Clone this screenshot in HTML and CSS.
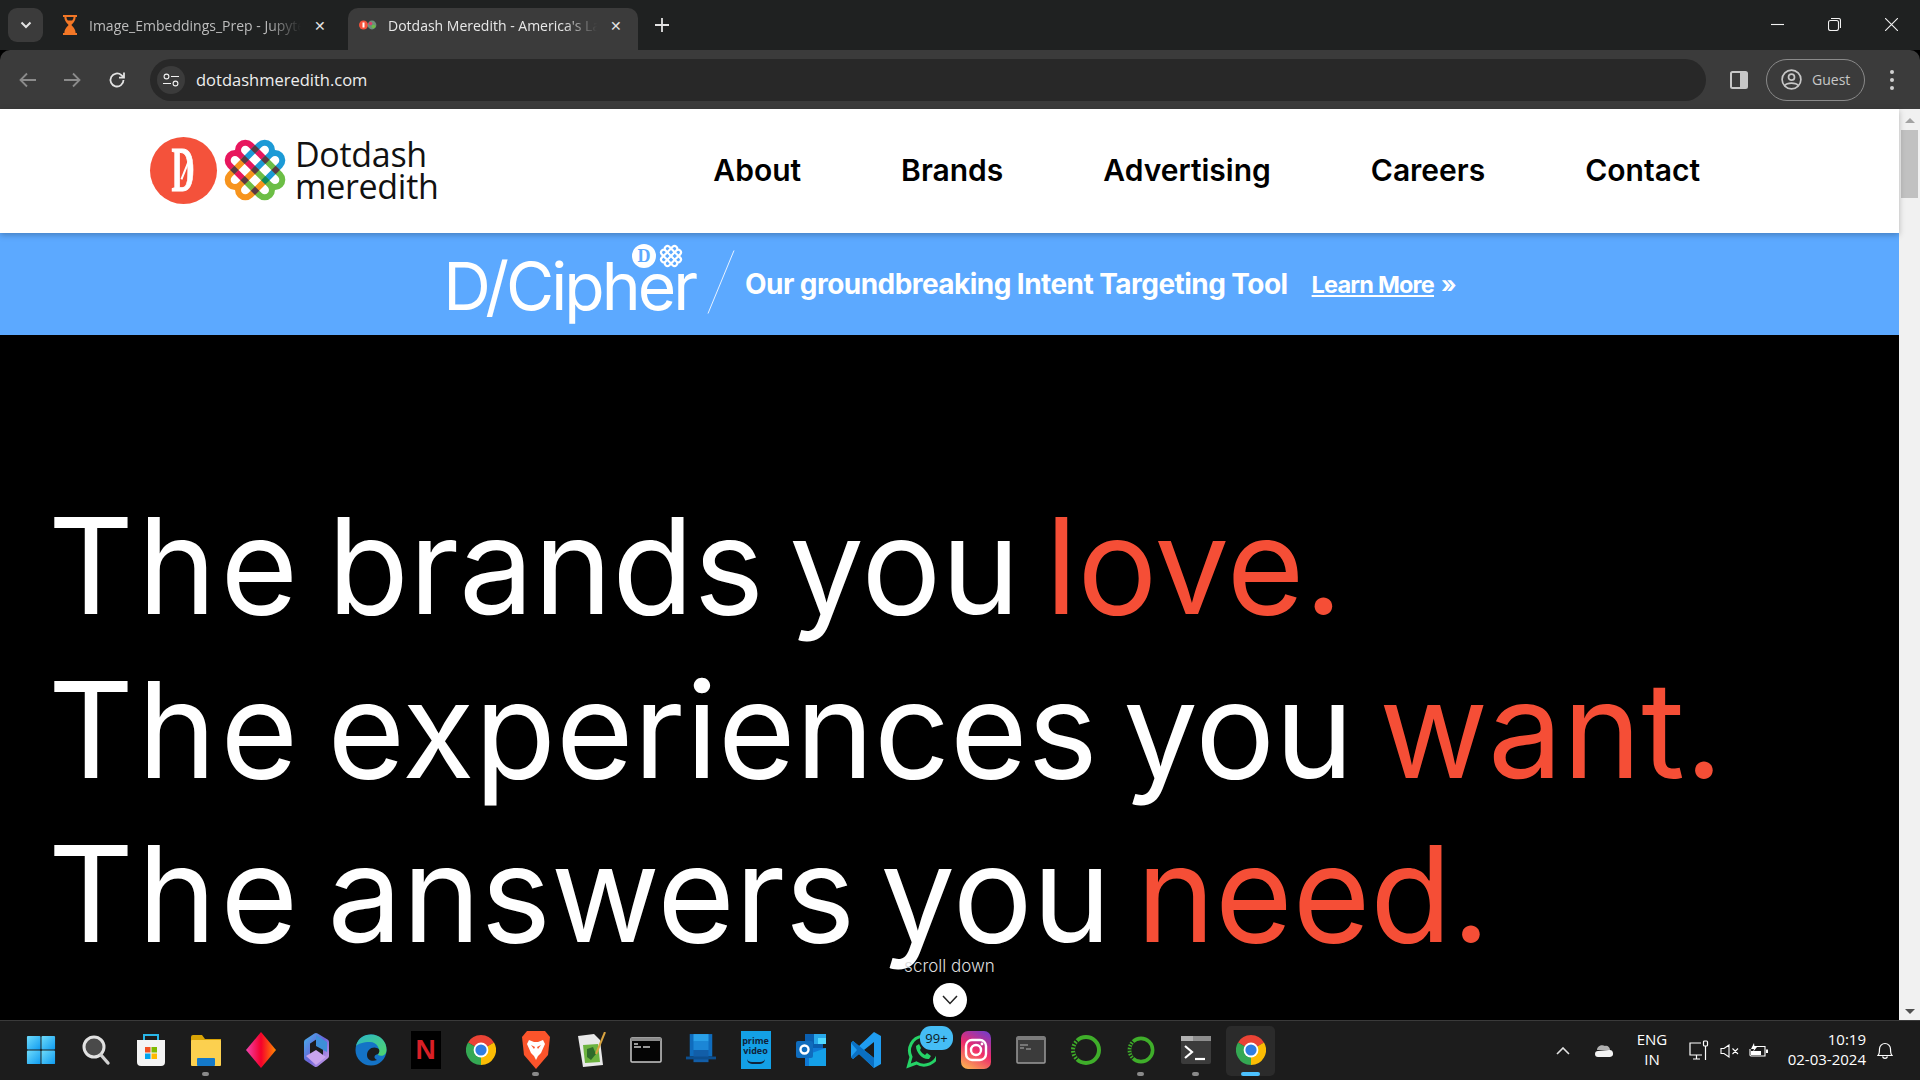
FILE: index.html
```html
<!DOCTYPE html>
<html lang="en">
<head>
    <meta charset="UTF-8">
    <title>Dotdash Meredith - America's Largest Digital and Print Publisher</title>
    <link rel="stylesheet" href="styles.css">
</head>
<body>

<svg class="defs" width="0" height="0">
    <defs>
        <g id="knotPath">
            <path d="M0 -14.6H-21A7.3 7.3 0 0 0 -21 0H0M0 0H-21A7.3 7.3 0 0 0 -21 14.6H0"/>
        </g>
        <g id="chromeLogo">
            <path fill="#ea4335" d="M15 15L2 7.5A15 15 0 0 1 28 7.5Z"/>
            <path fill="#fbbc04" d="M15 15L28 7.5A15 15 0 0 1 15 30Z"/>
            <path fill="#34a853" d="M15 15L15 30A15 15 0 0 1 2 7.5Z"/>
            <circle cx="15" cy="15" r="7.4" fill="#fff"/>
            <circle cx="15" cy="15" r="5.6" fill="#2f7de1"/>
        </g>
        <linearGradient id="edgeGrad" x1="0" y1="0" x2="1" y2="1">
            <stop offset="0" stop-color="#2bb6c9"/>
            <stop offset="1" stop-color="#50d66a"/>
        </linearGradient>
        <linearGradient id="copilotGrad" x1="0" y1="0" x2="1" y2="1">
            <stop offset="0" stop-color="#4aa5e8"/>
            <stop offset="0.5" stop-color="#6a62d8"/>
            <stop offset="1" stop-color="#c79ae8"/>
        </linearGradient>
        <linearGradient id="gemGrad" x1="0" y1="0" x2="1" y2="0">
            <stop offset="0" stop-color="#f044b0"/>
            <stop offset="0.5" stop-color="#f5002b"/>
            <stop offset="1" stop-color="#ff8a00"/>
        </linearGradient>
        <linearGradient id="winGrad" x1="0" y1="0" x2="1" y2="1">
            <stop offset="0" stop-color="#6fdcfb"/>
            <stop offset="1" stop-color="#0f9bf0"/>
        </linearGradient>
    </defs>
</svg>

<div class="tabstrip">
    <div class="tab-search">
        <svg width="12" height="8" viewBox="0 0 12 8"><path class="line" stroke-width="2" d="M1.5 1.5L6 6L10.5 1.5"/></svg>
    </div>
    <div class="tab">
        <svg class="fav" width="16" height="20" viewBox="0 0 16 20"><path fill="#f37726" d="M1 0H15V2H13.6C13.6 6 11 8 9.4 10C11 12 13.6 14 13.6 18H15V20H1V18H2.4C2.4 14 5 12 6.6 10C5 8 2.4 6 2.4 2H1ZM4.4 2C4.500 3.4 5 4.6 5.8 5.6H10.2C11 4.6 11.5 3.4 11.6 2Z"/></svg>
        <span class="tab-title">Image_Embeddings_Prep - Jupyter</span>
        <span class="tab-close">✕</span>
    </div>
    <div class="tab active">
        <svg class="fav" width="18" height="10" viewBox="0 0 18 10">
            <circle cx="4.5" cy="5" r="4.5" fill="#f4523b"/><rect x="3.5" y="2.5" width="2" height="5" fill="#fff"/>
            <circle cx="13" cy="5" r="4.4" fill="#6f8f7a"/><circle cx="11.5" cy="3.5" r="1.8" fill="#d8416b"/><circle cx="14.5" cy="6.5" r="1.8" fill="#6cbe45"/>
        </svg>
        <span class="tab-title">Dotdash Meredith - America's Largest</span>
        <span class="tab-close">✕</span>
    </div>
    <svg class="new-tab" width="14" height="14" viewBox="0 0 14 14"><path class="line" stroke-width="1.8" d="M7 0V14M0 7H14"/></svg>
    <div class="win-controls">
        <svg width="13" height="13" viewBox="0 0 13 13"><path class="thin" d="M0 6.5H13"/></svg>
        <svg width="13" height="13" viewBox="0 0 13 13"><rect class="thin" x="0.5" y="2.5" width="10" height="10" rx="2"/><path class="thin" d="M3 .5H10.5A2 2 0 0 1 12.5 2.5V10"/></svg>
        <svg width="13" height="13" viewBox="0 0 13 13"><path class="thin" d="M0 0L13 13M13 0L0 13"/></svg>
    </div>
</div>

<div class="toolbar">
    <svg class="nav-arrow" width="18" height="16" viewBox="0 0 18 16"><path class="dim" d="M17 8H2M8 1.5L1.5 8L8 14.5"/></svg>
    <svg class="nav-arrow" width="18" height="16" viewBox="0 0 18 16"><path class="dim" d="M1 8H16M10 1.5L16.5 8L10 14.5"/></svg>
    <svg class="nav-reload" width="18" height="18" viewBox="0 0 18 18"><path class="line" stroke-width="1.8" d="M15.5 9A6.5 6.5 0 1 1 13.4 4.2L16 6.6M16 1.5V6.6H11"/></svg>
    <div class="omnibox">
        <span class="site-chip">
            <svg width="16" height="14" viewBox="0 0 16 14"><circle class="thin" cx="3.5" cy="3.5" r="2.4"/><path class="thin" stroke-width="2" d="M8 3.5H16M0 10.5H8"/><circle class="thin" cx="12.5" cy="10.5" r="2.4"/></svg>
        </span>
        <span class="url">dotdashmeredith.com</span>
    </div>
    <svg class="split-icon" width="18" height="18" viewBox="0 0 18 18"><rect x="1" y="1" width="16" height="16" rx="1.5" fill="none" stroke="#c7c7c7" stroke-width="2"/><rect x="10" y="1" width="7" height="16" fill="#c7c7c7"/></svg>
    <div class="guest">
        <svg width="21" height="21" viewBox="0 0 21 21"><g fill="none" stroke="#c7c7c7" stroke-width="1.7"><circle cx="10.5" cy="10.5" r="9.4"/><circle cx="10.5" cy="8.2" r="3"/><path d="M4 16.5C6 13.4 15 13.4 17 16.5"/></g></svg>
        <span>Guest</span>
    </div>
    <div class="kebab"><i></i><i></i><i></i></div>
</div>

<div class="viewport">
    <div class="page">
        <header class="site-header">
            <a class="logo">
                <span class="logo-d">
                    <b>D</b>
                    <i class="logo-d-cut"></i>
                </span>
                <svg class="knot" width="66" height="66" viewBox="-33 -33 66 66">
                    <g transform="rotate(45)" fill="none" stroke-width="6">
                        <use href="#knotPath" stroke="#e8175d"/>
                        <use href="#knotPath" stroke="#1c9ad6" transform="rotate(90)"/>
                        <use href="#knotPath" stroke="#6cbe45" transform="rotate(180)"/>
                        <use href="#knotPath" stroke="#f7941d" transform="rotate(270)"/>
                    </g>
                    <g fill="#5a3a42" transform="rotate(45)">
                        <rect x="-17.6" y="-17.6" width="6" height="6"/><rect x="-3" y="-17.6" width="6" height="6"/><rect x="11.6" y="-17.6" width="6" height="6"/>
                        <rect x="-17.6" y="-3" width="6" height="6"/><rect x="-3" y="-3" width="6" height="6"/><rect x="11.6" y="-3" width="6" height="6" fill="#0f8a5a"/>
                        <rect x="-17.6" y="11.6" width="6" height="6"/><rect x="-3" y="11.6" width="6" height="6"/><rect x="11.6" y="11.6" width="6" height="6"/>
                    </g>
                </svg>
                <span class="logo-text">Dotdash<br>meredith</span>
            </a>
            <nav class="main-nav">
                <a>About</a>
                <a>Brands</a>
                <a>Advertising</a>
                <a>Careers</a>
                <a>Contact</a>
            </nav>
        </header>

        <div class="promo">
            <div class="cipher">
                D/Cipher
                <span class="cipher-marks">
                    <span class="mini-d">D</span>
                    <svg width="24" height="24" viewBox="-33 -33 66 66">
                        <g transform="rotate(45)" fill="none" stroke="#fff" stroke-width="6">
                            <use href="#knotPath"/>
                            <use href="#knotPath" transform="rotate(90)"/>
                            <use href="#knotPath" transform="rotate(180)"/>
                            <use href="#knotPath" transform="rotate(270)"/>
                        </g>
                    </svg>
                </span>
            </div>
            <svg class="promo-slash" width="28" height="64" viewBox="0 0 28 64"><path stroke="#e8f2ff" d="M27 0.5L1 63.5"/></svg>
            <span class="promo-text">Our groundbreaking Intent Targeting Tool</span>
            <span class="promo-link"><u>Learn More</u><span class="promo-arrows">»</span></span>
        </div>

        <section class="hero">
            <h1>
                <span><i class="lead">The</i> brands you <em>love.</em></span>
                <span><i class="lead">The</i> experiences you <em>want.</em></span>
                <span><i class="lead">The</i> answers you <em>need.</em></span>
            </h1>
            <div class="scroll-down">
                <span>scroll down</span>
                <i>
                    <svg width="16" height="10" viewBox="0 0 16 10"><path fill="none" stroke="#222" stroke-width="1.5" d="M1 1L8 8.5L15 1"/></svg>
                </i>
            </div>
        </section>
    </div>
    <div class="scrollbar">
        <i class="arrow-up"></i>
        <i class="thumb"></i>
        <i class="arrow-down"></i>
    </div>
</div>

<footer class="taskbar">
    <div class="task-icons">
        <div class="task"><svg width="30" height="30" viewBox="0 0 32 32"><g fill="url(#winGrad)"><rect x="1" y="1" width="14.5" height="14.5" rx="1"/><rect x="16.5" y="1" width="14.5" height="14.5" rx="1"/><rect x="1" y="16.5" width="14.5" height="14.5" rx="1"/><rect x="16.5" y="16.5" width="14.5" height="14.5" rx="1"/></g></svg></div>
        <div class="task"><svg width="30" height="32" viewBox="0 0 30 32"><circle cx="13" cy="13" r="10" fill="#4a4a4a" stroke="#e2e2e2" stroke-width="3"/><path stroke="#d0d0d0" stroke-width="3.4" stroke-linecap="round" d="M20 21L27 29"/></svg></div>
        <div class="task"><svg width="30" height="34" viewBox="0 0 30 34"><path fill="none" stroke="#29b6e8" stroke-width="2" d="M8 8V2H22V8"/><path fill="#f4f4f4" d="M1 7H29V29A4 4 0 0 1 25 33H5A4 4 0 0 1 1 29Z"/><rect x="9" y="14" width="5.5" height="5.5" fill="#f25022"/><rect x="15.5" y="14" width="5.5" height="5.5" fill="#7fba00"/><rect x="9" y="20.5" width="5.5" height="5.5" fill="#00a4ef"/><rect x="15.5" y="20.5" width="5.5" height="5.5" fill="#ffb900"/></svg></div>
        <div class="task running"><svg width="30" height="32" viewBox="0 0 30 32"><path fill="#d9a406" d="M0 3A2 2 0 0 1 2 1H11L14 5H30V12H0Z"/><rect y="6" width="30" height="26" rx="1" fill="#fcd04f"/><rect x="6" y="24" width="18" height="8" rx="1" fill="#1479c9"/></svg></div>
        <div class="task"><svg width="30" height="36" viewBox="0 0 30 36"><path fill="url(#gemGrad)" d="M15 0L30 18L15 36L0 18Z"/></svg></div>
        <div class="task"><svg width="28" height="36" viewBox="0 0 28 36"><path fill="none" stroke="url(#copilotGrad)" stroke-width="6" stroke-linejoin="round" d="M14 4L24 10V24L14 32L5 26V10Z"/><path fill="#c9a4ee" d="M4 24L14 18L24 25L14 33Z"/><path fill="#3d8fd8" d="M14 3L25 10V20L14 14Z"/></svg></div>
        <div class="task"><svg width="32" height="38" viewBox="0 0 32 38"><circle cx="16" cy="19" r="15.5" fill="#1473c6"/><path fill="url(#edgeGrad)" d="M1 15C3 6 10 3.500 16 3.500C25 3.500 31.500 10 31.500 19C31.500 24 27 26 23 24C26 18 22 11 15 11C8 11 3 13 1 15Z"/><path fill="#1c1c1c" d="M12 24C12 19 17 15 22 17C25 18 25 21 23 23C19 24 18 27 22 29C17 31 12 29 12 24Z"/></svg></div>
        <div class="task"><div class="netflix">N</div></div>
        <div class="task"><svg width="30" height="38" viewBox="0 0 30 30"><use href="#chromeLogo"/></svg></div>
        <div class="task running"><svg width="30" height="38" viewBox="0 0 30 38"><path fill="#fb542b" d="M6 0H24L29 6L27 24L15 38L3 24L1 6Z"/><path fill="#fff" d="M8 9L13 11H17L22 9L24 13L20 22L17 25L15 29L13 25L10 22L6 13Z"/><path fill="#fb542b" d="M10 14L14 16L13 18ZM20 14L16 16L17 18Z"/></svg></div>
        <div class="task"><svg width="30" height="36" viewBox="0 0 30 36"><path fill="#e9e9e9" d="M2 4L18 2L24 8L27 33L7 35Z"/><path fill="#6cb33f" d="M7 13L22 12L24 30L9 31Z"/><path fill="#2e6b2a" d="M11 17L17 15L20 22L15 28L11 25Z"/><path stroke="#d9a441" stroke-width="2" d="M29 0L20 22"/></svg></div>
        <div class="task"><svg width="32" height="26" viewBox="0 0 32 26"><rect x="1" y="1" width="30" height="24" rx="1" fill="#050505" stroke="#c9c9c9" stroke-width="1.5"/><rect x="1" y="1" width="30" height="3" fill="#8a8a8a"/><path stroke="#ccc" stroke-width="1.4" d="M4 7H8M4 10H11M13 10H20"/></svg></div>
        <div class="task"><svg width="30" height="32" viewBox="0 0 32 34"><path fill="#0f6cbd" d="M4 0H28V24H4Z"/><path fill="#2aa0e8" d="M8 0H24V8H8Z"/><path fill="#1b86d6" d="M8 8H24V17H8Z"/><path fill="#125ea8" d="M8 17H24V30H8Z"/><rect y="24" width="32" height="3" fill="#0c4f8f"/></svg></div>
        <div class="task"><div class="prime">prime<br>video<i></i></div></div>
        <div class="task"><svg width="30" height="36" viewBox="0 0 30 36"><path fill="#0a5fb0" d="M9 2H27V16H9Z"/><path fill="#28a8ea" d="M18 2H30V12H18Z"/><path fill="#50d9ff" d="M22 6H30V12H22Z"/><path fill="#0f78d4" d="M9 16H30V34H9Z"/><path fill="#14a0e8" d="M13 22L30 16V34H13Z"/><rect y="9" width="17" height="17" rx="2" fill="#0f6cbd"/><circle cx="8.500" cy="17.500" r="4" fill="none" stroke="#fff" stroke-width="2.400"/></svg></div>
        <div class="task"><svg width="32" height="38" viewBox="0 0 32 38"><path fill="#1f9cf0" d="M24 1L31 5V33L24 37L9 23L3 28L1 26V12L3 10L9 15ZM24 11L14 19L24 27Z"/><path fill="#0a6fc2" d="M1 12L3 10L24 27V37L9 23L3 28L1 26L7 19Z"/></svg></div>
        <div class="task whatsapp"><svg width="30" height="38" viewBox="0 0 30 38"><path fill="none" stroke="#25d366" stroke-width="3" d="M2.500 35L5 26A14.500 14.500 0 1 1 10.500 32Z"/><path fill="#25d366" d="M10 15L13 13L15 17L14 19C15 21 17 23 19 24L21 22L25 25L23 28C17 29 10 22 10 15Z"/></svg><span class="badge">99+</span></div>
        <div class="task"><div class="insta"><svg width="30" height="30" viewBox="0 0 30 30"><g fill="none" stroke="#fff" stroke-width="2.400"><rect x="5" y="5" width="20" height="20" rx="6"/><circle cx="15" cy="15" r="5"/></g><circle cx="21" cy="9" r="1.400" fill="#fff"/></svg></div></div>
        <div class="task"><svg width="30" height="28" viewBox="0 0 30 28"><rect x="1" y="1" width="28" height="26" rx="1" fill="#3b3b3b" stroke="#9a9a9a" stroke-width="1.500"/><rect x="1" y="1" width="28" height="3" fill="#7b7b7b"/><path stroke="#8a8a8a" stroke-width="1.400" d="M4 9H12M4 12H8M10 13H15"/></svg></div>
        <div class="task"><svg width="30" height="38" viewBox="0 0 30 38"><circle cx="15" cy="19" r="13" fill="none" stroke="#3fae2a" stroke-width="4"/><path stroke="#1c1c1c" stroke-width="4.400" stroke-dasharray="1.500 1.800" fill="none" d="M6 9.500A13 13 0 0 0 6 28.500"/></svg></div>
        <div class="task running"><svg width="28" height="34" viewBox="0 0 30 38"><circle cx="15" cy="19" r="13" fill="none" stroke="#3fae2a" stroke-width="4"/><path stroke="#1c1c1c" stroke-width="4.400" stroke-dasharray="1.500 1.800" fill="none" d="M6 9.500A13 13 0 0 0 6 28.500"/></svg></div>
        <div class="task running"><svg width="30" height="28" viewBox="0 0 30 28"><rect width="30" height="28" rx="2" fill="#3b3b3b"/><rect width="30" height="5" fill="#8d8d8d"/><rect width="12" height="5" fill="#b0b0b0"/><path fill="none" stroke="#fff" stroke-width="2.200" d="M4 10L11 16L4 22"/><path stroke="#fff" stroke-width="2.200" d="M14 23H24"/></svg></div>
        <div class="task current"><svg width="30" height="38" viewBox="0 0 30 30"><use href="#chromeLogo"/></svg></div>
    </div>
    <div class="tray">
        <svg class="tray-caret" width="14" height="8" viewBox="0 0 14 8"><path class="line" stroke-width="1.6" d="M1 7L7 1L13 7"/></svg>
        <svg class="tray-cloud" width="20" height="13" viewBox="0 0 20 13"><path fill="#b0b0b0" d="M3 6C3 2 8 0 11 2C13 1 16 3 16 6Z"/><path fill="#f2f2f2" d="M4 13A3 3 0 0 1 4 7L15 6A3.500 3.500 0 0 1 16 13Z"/></svg>
        <div class="tray-lang">ENG<br>IN</div>
        <svg class="tray-net" width="21" height="21" viewBox="0 0 21 21"><g fill="none" stroke="#fff" stroke-width="1.200"><path d="M13 3H2V15H14M5 19H12M8.500 15V19"/><rect x="15.500" y="1" width="4" height="5" rx="1"/><path d="M17.500 6V20"/></g></svg>
        <svg class="tray-vol" width="20" height="14" viewBox="0 0 20 14"><path fill="none" stroke="#fff" stroke-width="1.100" d="M1 4.500H4L9 1V13L4 9.500H1ZM12.500 4.500L18 10M18 4.500L12.500 10"/></svg>
        <svg class="tray-batt" width="20" height="15" viewBox="0 0 20 15"><path fill="none" stroke="#fff" stroke-width="1.100" d="M4 3.500H16V13H2A1 1 0 0 1 1 12V6"/><rect x="2" y="8" width="10" height="4" fill="#fff"/><rect x="17" y="6.500" width="2" height="3.500" fill="#fff"/><path fill="#fff" d="M5 0L2 6H5L4 9L8 4H5.500Z"/></svg>
        <div class="tray-clock">10:19<br>02-03-2024</div>
        <svg class="tray-bell" width="16" height="18" viewBox="0 0 16 18"><path fill="none" stroke="#fff" stroke-width="1.200" d="M1 13.500C2.500 12 2.500 10 2.500 7A5.500 5.500 0 0 1 13.500 7C13.500 10 13.500 12 15 13.500ZM5.500 14.500A2.600 2.600 0 0 0 10.500 14.500"/></svg>
    </div>
</footer>

</body>
</html>
```

FILE: styles.css
```css
* {
    box-sizing: border-box;
}
html, body {
    margin: 0;
    height: 100%;
}
body {
    width: 1920px;
    height: 1080px;
    overflow: hidden;
    display: flex;
    flex-direction: column;
    font-family: Inter, "Liberation Sans", sans-serif;
    background: #000;
}
.defs {
    position: absolute;
}
.line, .thin, .dim {
    fill: none;
    stroke: #e3e3e3;
}
.thin {
    stroke: #f2f2f2;
    stroke-width: 1.1;
}
.dim {
    stroke: #8b8b8b;
    stroke-width: 1.8;
}

/* browser chrome */
.tabstrip {
    height: 50px;
    background: #1f2121;
    display: flex;
    align-items: flex-end;
    padding-left: 8px;
    font-family: "Open Sans", sans-serif;
    font-size: 14px;
}
.tab-search {
    width: 35px;
    height: 34px;
    margin-bottom: 8px;
    background: #3b3b3b;
    border-radius: 9px;
    display: flex;
    align-items: center;
    justify-content: center;
}
.tab {
    height: 42px;
    display: flex;
    align-items: center;
    color: #bdbdbd;
    padding-bottom: 8px;
    border-radius: 10px 10px 0 0;
}
.tab:nth-child(2) {
    width: 305px;
    padding-left: 19px;
    padding-right: 17px;
}
.tab.active {
    width: 290px;
    background: #3b3b3b;
    color: #e8e8e8;
    padding-left: 11px;
    padding-right: 11px;
}
.fav {
    flex: none;
    margin-right: 11px;
}
.tab-title {
    flex: 1;
    white-space: nowrap;
    overflow: hidden;
    -webkit-mask-image: linear-gradient(to right, #000 84%, transparent);
    mask-image: linear-gradient(to right, #000 84%, transparent);
}
.tab-close {
    width: 22px;
    text-align: center;
    font-size: 14px;
    margin-left: 8px;
    color: #e3e3e3;
}
.new-tab {
    margin: 0 0 18px 17px;
}
.win-controls {
    margin-left: auto;
    display: flex;
    gap: 44px;
    padding: 0 22px 19px 0;
}
.toolbar {
    height: 59px;
    background: #3b3b3b;
    border-radius: 10px 10px 0 0;
    display: flex;
    align-items: center;
    padding-left: 19px;
}
.nav-arrow {
    margin-right: 26px;
}
.nav-reload {
    margin-left: 1px;
}
.omnibox {
    width: 1556px;
    height: 42px;
    margin-left: 24px;
    border-radius: 21px;
    background: #282828;
    display: flex;
    align-items: center;
    padding-left: 7px;
    font-family: "Open Sans", sans-serif;
    font-size: 16.5px;
    color: #eee;
}
.site-chip {
    width: 28px;
    height: 28px;
    border-radius: 50%;
    background: #3b3b3b;
    display: flex;
    align-items: center;
    justify-content: center;
    margin-right: 11px;
}
.split-icon {
    margin-left: 24px;
}
.guest {
    width: 99px;
    height: 42px;
    margin-left: 18px;
    border: 1px solid #8a8a8a;
    border-radius: 21px;
    display: flex;
    align-items: center;
    gap: 10px;
    padding-left: 14px;
    color: #c7c7c7;
    font-family: "Open Sans", sans-serif;
    font-size: 14px;
}
.kebab {
    margin-left: 25px;
    display: flex;
    flex-direction: column;
    gap: 4px;
}
.kebab i {
    width: 4px;
    height: 4px;
    border-radius: 50%;
    background: #d0d0d0;
}

/* page */
.viewport {
    flex: 1;
    display: flex;
    min-height: 0;
}
.page {
    flex: 1;
    display: flex;
    flex-direction: column;
    min-width: 0;
}
.site-header {
    height: 124px;
    background: #fff;
    display: flex;
    align-items: center;
    padding-left: 150px;
    box-shadow: 0 2px 6px rgba(0, 0, 0, 0.25);
    z-index: 1;
}
.logo {
    display: flex;
    align-items: center;
    padding-bottom: 2px;
}
.logo-d {
    position: relative;
    width: 67px;
    height: 67px;
    border-radius: 50%;
    background: #f4523b;
    color: #fff;
    display: flex;
    align-items: center;
    justify-content: center;
    font-family: "Liberation Serif", serif;
    font-size: 64px;
    line-height: 1;
}
.logo-d b {
    transform: scaleX(0.5);
    -webkit-text-stroke: 1px #fff;
}
.logo-d-cut {
    position: absolute;
    left: 34px;
    top: 24px;
    width: 2px;
    height: 19px;
    background: #fff;
    transform: rotate(22deg);
}
.knot {
    margin-left: 5px;
}
.logo-text {
    margin-left: 7px;
    font-family: "Open Sans", sans-serif;
    font-size: 34px;
    line-height: 32px;
    color: #111;
    letter-spacing: -0.3px;
}
.main-nav {
    margin-left: auto;
    margin-right: 199px;
    padding-bottom: 2px;
    display: flex;
    gap: 100px;
    font-size: 30px;
    font-weight: 600;
    color: #000;
}
.promo {
    height: 102px;
    background: #5ca9ff;
    color: #fff;
    display: flex;
    align-items: center;
    justify-content: center;
}
.cipher {
    position: relative;
    font-size: 66px;
    font-weight: 400;
    letter-spacing: -3px;
    line-height: 1;
    margin-top: 4px;
}
.cipher-marks {
    position: absolute;
    right: 12px;
    top: -9px;
    display: flex;
    gap: 3px;
}
.mini-d {
    width: 24px;
    height: 24px;
    border-radius: 50%;
    background: #fff;
    color: #5ca9ff;
    font-family: "Liberation Serif", serif;
    font-size: 18px;
    font-weight: 700;
    letter-spacing: 0;
    line-height: 24px;
    text-align: center;
}
.promo-slash {
    margin: -4px 10px 0 12px;
}
.promo-text {
    font-size: 28px;
    font-weight: 700;
    letter-spacing: -0.55px;
}
.promo-link {
    margin-left: 24px;
    font-size: 23.5px;
    font-weight: 700;
    letter-spacing: -0.8px;
}
.promo-arrows {
    margin-left: 7px;
}
.hero {
    flex: 1;
    position: relative;
    background: #000;
    color: #fff;
    padding: 149px 0 0 48px;
    overflow: hidden;
}
.hero h1 {
    margin: 0;
    font-size: 133px;
    font-weight: 400;
    line-height: 164px;
    letter-spacing: 0;
    word-spacing: -12px;
}
.hero h1 span {
    display: block;
    white-space: nowrap;
}
.hero .lead {
    font-style: normal;
    letter-spacing: 4px;
}
.hero em {
    font-style: normal;
    color: #f54e36;
}
.scroll-down {
    position: absolute;
    left: 0;
    right: 0;
    bottom: 3px;
    display: flex;
    flex-direction: column;
    align-items: center;
    gap: 7px;
    color: #ddd;
    font-size: 17px;
    font-weight: 300;
}
.scroll-down i {
    width: 34px;
    height: 34px;
    border-radius: 50%;
    background: #fff;
    display: flex;
    align-items: center;
    justify-content: center;
}
.scrollbar {
    width: 21px;
    background: #f1f1f1;
    display: flex;
    flex-direction: column;
    align-items: center;
    padding-top: 9px;
}
.arrow-up, .arrow-down {
    width: 0;
    height: 0;
    border-left: 5px solid transparent;
    border-right: 5px solid transparent;
}
.arrow-up {
    border-bottom: 5px solid #a3a3a3;
}
.arrow-down {
    margin-top: auto;
    margin-bottom: 6px;
    border-top: 5px solid #505050;
}
.thumb {
    width: 17px;
    height: 68px;
    margin-top: 7px;
    background: #c1c1c1;
}

/* windows taskbar */
.taskbar {
    height: 60px;
    flex: none;
    background: #1c1c1c;
    border-top: 1px solid #3a3a3a;
    display: flex;
    align-items: center;
    font-family: "Open Sans", sans-serif;
    font-size: 15px;
    color: #fff;
}
.task-icons {
    display: flex;
    padding-left: 13px;
}
.task {
    position: relative;
    width: 55px;
    height: 50px;
    padding-bottom: 2px;
    display: flex;
    align-items: center;
    justify-content: center;
    border-radius: 5px;
}
.task.running::after, .task.current::after {
    content: "";
    position: absolute;
    bottom: 0;
    left: 24px;
    width: 7px;
    height: 4px;
    border-radius: 2px;
    background: #8a8a8a;
}
.task.current {
    width: 49px;
    margin: 0 3px;
    background: #2b2b2b;
}
.task.current::after {
    left: 15px;
    width: 19px;
    background: #4cc2ff;
}
.netflix {
    width: 30px;
    height: 38px;
    background: #000;
    color: #d81f26;
    font-family: "Liberation Sans", sans-serif;
    font-size: 28px;
    font-weight: 700;
    line-height: 38px;
    text-align: center;
}
.prime {
    position: relative;
    width: 30px;
    height: 38px;
    background: #13a0e6;
    color: #10233a;
    font-size: 9px;
    font-weight: 700;
    line-height: 10px;
    padding-top: 5px;
    text-align: center;
}
.prime i {
    position: absolute;
    left: 6px;
    bottom: 5px;
    width: 18px;
    height: 5px;
    border-bottom: 2px solid #10233a;
    border-radius: 0 0 10px 10px;
}
.badge {
    position: absolute;
    left: 27px;
    top: 0;
    width: 33px;
    height: 24px;
    border-radius: 11px;
    background: #45bdf5;
    color: #0d1b24;
    font-size: 13px;
    line-height: 24px;
    text-align: center;
}
.insta {
    width: 30px;
    height: 38px;
    border-radius: 7px;
    background: linear-gradient(30deg, #fdc04f, #ef2c6b 50%, #6a3dd1);
    display: flex;
    align-items: center;
    justify-content: center;
}
.tray {
    margin-left: auto;
    display: flex;
    align-items: center;
    padding-right: 27px;
}
.tray-lang {
    width: 40px;
    margin: 0 0 3px 18px;
    text-align: center;
    line-height: 20px;
}
.tray-cloud {
    margin-left: 24px;
}
.tray-net {
    margin-left: 16px;
}
.tray-vol {
    margin-left: 11px;
}
.tray-batt {
    margin-left: 9px;
}
.tray-clock {
    width: 89px;
    margin: 0 0 3px 8px;
    text-align: right;
    line-height: 20px;
}
.tray-bell {
    margin-left: 11px;
}
```
